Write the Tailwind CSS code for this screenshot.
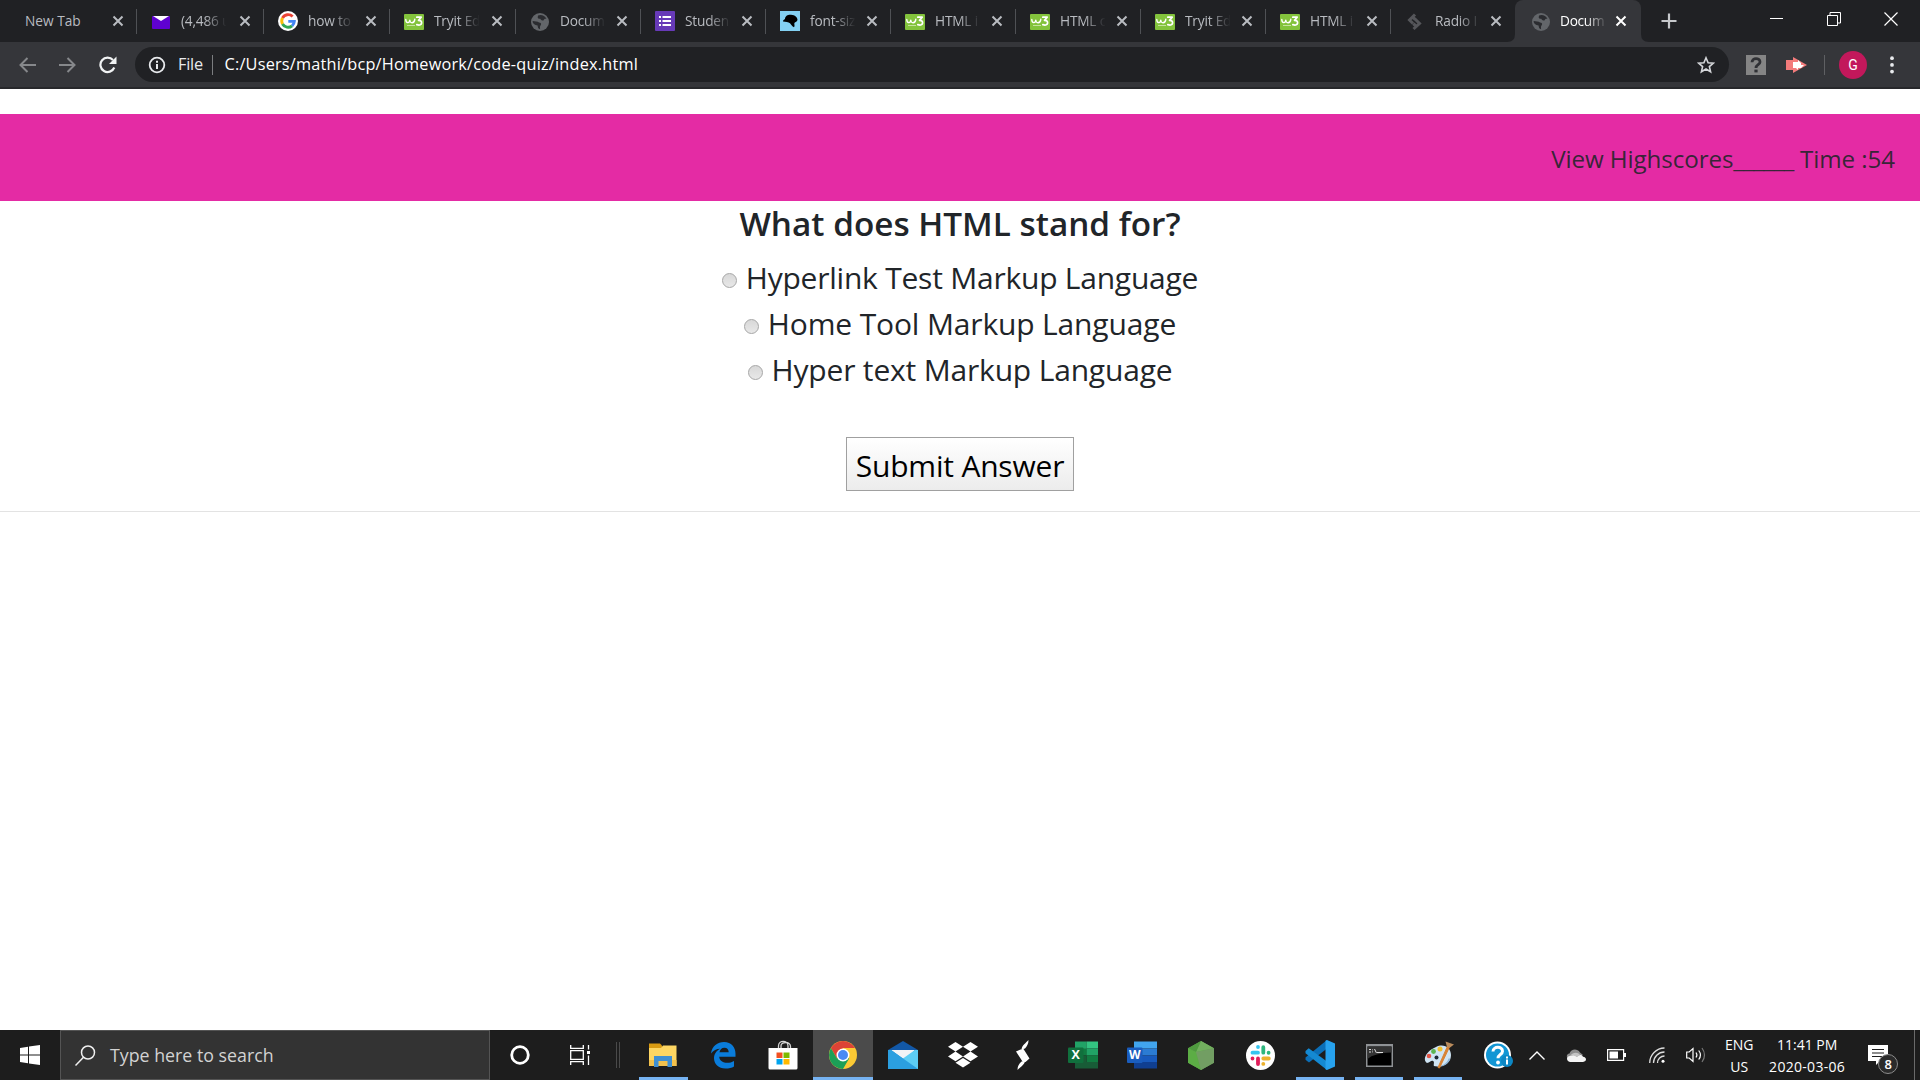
<!DOCTYPE html>
<html lang="en">
<head>
<meta charset="utf-8">
<title>Document</title>
<script src="https://cdn.jsdelivr.net/npm/@tailwindcss/browser@4"></script>
</head>
<body class="w-[1920px] h-[1080px] overflow-hidden bg-white flex flex-col font-['Open_Sans','Noto_Sans',sans-serif]">

<svg class="hidden">
  <symbol id="yahoo" viewBox="0 0 20 20"><rect x="1" y="5" width="18" height="13" rx="1" fill="#5f01d1"/><path d="M2 5h16l-8 5z" fill="#fff"/></symbol>
  <symbol id="google" viewBox="0 0 20 20"><circle cx="10" cy="10" r="10" fill="#fff"/><g fill="none" stroke-width="2.9"><path d="M14.6 5.6A6.3 6.3 0 0 0 4.5 7" stroke="#ea4335"/><path d="M4.5 7a6.3 6.3 0 0 0 0 6" stroke="#fbbc05"/><path d="M4.5 13a6.3 6.3 0 0 0 9.6 1.8" stroke="#34a853"/><path d="M14.1 14.8a6.3 6.3 0 0 0 2.2-4.4H10.3" stroke="#4285f4"/></g></symbol>
  <symbol id="w3" viewBox="0 0 20 20"><rect y="3" width="20" height="16" rx="1" fill="#83c33c"/><g fill="none" stroke="#fff" stroke-width="1.4" stroke-linecap="round" stroke-linejoin="round"><path d="M1.800 8.500c0 4 4 4 4 .6c0 3.600 4.400 3.600 5-.8"/><path d="M12.800 6.200h4.400l-2.700 3.200c4.500-.4 4.300 6.400-1.700 4.200" stroke-width="1.700"/></g><path d="M3 14.500h8" stroke="#c5e39c" stroke-width="1"/></symbol>
  <symbol id="globe" viewBox="0 0 20 20"><circle cx="10" cy="11" r="9" fill="#63666a"/><path d="M8 4.500c3-1.500 7 0 8.500 3.500c-1.500-.5-2.500 0-3 1.500c-1.500.3-2.700-.5-3.200-1.800c-1.300.3-2.300-.2-2.600-1.200zM2.600 10c2.500.2 5 .4 6.400 1.500c1.800.2 2.600 1.200 1.900 2.500c-1 .7-1 2-.8 4.300c-2-.2-2.300-2.300-2.500-3.800C4.500 14 2.500 12.500 2.600 10z" fill="#2b2c30"/></symbol>
  <symbol id="forms" viewBox="0 0 20 20"><rect width="20" height="20" rx="1" fill="#673ab7"/><path d="M4 5h2v2H4zm3.500 0H16v2H7.500zM4 9h2v2H4zm3.500 0H16v2H7.500zM4 13h2v2H4zm3.500 0H16v2H7.500z" fill="#fff"/></symbol>
  <symbol id="mdn" viewBox="0 0 20 20"><rect width="20" height="20" fill="#83d0f2"/><path d="M3 10.500c0-1.500 1-2 2-2.500c0-3 3-4.500 6-4.200c4 .2 6.500 2.500 6.500 5.200c-.5 2-3 2-3.200 3.500c0 1.500.7 2.500-.3 3.700c-2-.7-2.500-2.500-4-4c-1.500-1.500-4.500-1-7-1.700z" fill="#000"/></symbol>
  <symbol id="bracket" viewBox="0 0 20 20"><path d="M10 3.500L4.500 9l3.500 3.500M8 8.500l2.200-2.200M10 8l4.500 4.500L8.500 18M10.500 12.500l-2.200 2.200" fill="none" stroke="#55565a" stroke-width="3"/></symbol>
  <symbol id="x" viewBox="0 0 12 12"><path d="M1.500 1.500l9 9m0-9l-9 9" fill="none" stroke="currentColor" stroke-width="2"/></symbol>
</svg>

<!-- Tab strip -->
<header class="h-[42px] shrink-0 bg-[#202124] flex items-start text-[13.700px] text-[#b9bcc1]">
  <div id="tabs" class="flex"></div>
  <div class="w-[126px] h-[42px] rounded-t-lg bg-[#35363a] flex items-center pl-4 text-white relative">
    <svg class="absolute -left-2 bottom-0 size-2" viewBox="0 0 8 8"><path d="M8 0v8H0q8 0 8-8" fill="#35363a"/></svg>
    <svg class="absolute -right-2 bottom-0 size-2" viewBox="0 0 8 8"><path d="M0 0v8h8q-8 0-8-8" fill="#35363a"/></svg>
    <svg class="size-5 shrink-0"><use href="#globe"/></svg>
    <span class="ml-[9px] w-[47px] whitespace-nowrap tracking-[-0.3px] [mask-image:linear-gradient(to_right,black_55%,transparent)]">Docum</span>
    <svg class="size-3 ml-[8px] shrink-0"><use href="#x"/></svg>
  </div>
  <svg class="size-4 mt-[13px] ml-5" viewBox="0 0 16 16"><path d="M8 .5v15M.5 8h15" stroke="#c6c8cb" stroke-width="2.200"/></svg>
  <div class="ml-auto flex items-center h-[37px] pr-[22px] gap-[43px] text-white">
    <svg class="size-[14px]" viewBox="0 0 14 14"><path d="M0 6.500h13" stroke="currentColor"/></svg>
    <svg class="size-[14px]" viewBox="0 0 14 14"><path d="M.5 3.500h10v10h-10zM3 3.500V.5h10.500v10.500h-3" fill="none" stroke="currentColor"/></svg>
    <svg class="size-[14px]" viewBox="0 0 14 14"><path d="M.5 .5l13 13m0-13l-13 13" stroke="currentColor" stroke-width="1.200"/></svg>
  </div>
</header>

<!-- Toolbar -->
<nav class="h-[47px] shrink-0 bg-[#35363a] border-b-2 border-[#27282b] flex items-center">
  <svg class="w-[17px] h-[16px] ml-[19px]" viewBox="0 0 17 16" fill="none" stroke="#86888b" stroke-width="2"><path d="M17 8H2M8.500 1L1.500 8l7 7"/></svg>
  <svg class="w-[17px] h-[16px] ml-[23px]" viewBox="0 0 17 16" fill="none" stroke="#86888b" stroke-width="2"><path d="M0 8h15M8.500 1l7 7-7 7"/></svg>
  <svg class="size-[18px] ml-[23px]" viewBox="0 0 18 18"><path d="M15.300 11.500A7.200 7.200 0 1 1 14 4" fill="none" stroke="#f1f3f4" stroke-width="2.200"/><path d="M17.500 .500v7.500H10z" fill="#f1f3f4"/></svg>
  <div class="ml-[18px] w-[1594px] h-[35px] rounded-full bg-[#202124] flex items-center text-white text-[16.300px]">
    <svg class="size-[18px] ml-[13px]" viewBox="0 0 18 18"><circle cx="9" cy="9" r="7.300" fill="none" stroke="#e8eaed" stroke-width="1.800"/><path d="M8 8h2v5H8zM8 4.800h2v2H8z" fill="#e8eaed"/></svg>
    <span class="ml-3 tracking-[-0.2px] text-[#e8eaed]">File</span>
    <i class="w-[1.500px] h-5 bg-[#7b7d80] ml-[9px]"></i>
    <span class="ml-[11px] tracking-[0.210px]">C:/Users/mathi/bcp/Homework/code-quiz/index.html</span>
    <svg class="size-[18px] ml-auto mr-[14px]" viewBox="0 0 18 18"><path d="M9 1.800l2.100 4.900 5.300.4-4 3.500 1.200 5.200L9 13l-4.600 2.800 1.200-5.200-4-3.500 5.300-.4z" fill="none" stroke="#d4d6d9" stroke-width="1.600"/></svg>
  </div>
  <svg class="size-5 ml-[17px]" viewBox="0 0 20 20"><rect width="20" height="20" fill="#858585"/><path d="M6 7.200C6 2.500 14 2.500 14 7c0 2.800-4 2.700-4 6" fill="none" stroke="#303135" stroke-width="2.800"/><rect x="8.400" y="14.600" width="3.200" height="2.800" fill="#303135"/></svg>
  <svg class="w-[21px] h-[18px] ml-5" viewBox="0 0 21 18"><path d="M0 4h7V1l14 8-14 8v-3H0z" fill="#f37b7b"/><path d="M7 6h5V4l3 3v2h3l-3 3h-3v2l-2-2H7z" fill="#fff"/></svg>
  <i class="w-px h-5 bg-[#5f6063] ml-[17px]"></i>
  <span class="ml-[14px] size-7 rounded-full bg-[#c2185b] text-white text-[14px] leading-7 text-center font-[Roboto]">G</span>
  <svg class="w-1 h-[18px] ml-[23px]" viewBox="0 0 4 18" fill="#e8eaed"><circle cx="2" cy="2.200" r="1.900"/><circle cx="2" cy="8.900" r="1.900"/><circle cx="2" cy="15.600" r="1.900"/></svg>
</nav>

<!-- Quiz page -->
<main class="grow text-[#212529] pt-[25px] text-center">
  <div class="h-[87px] bg-[#e42ba4] pr-[25px] text-right text-[24.200px] leading-[89px] text-[#212529]/90 whitespace-pre tracking-[-0.100px] font-[370]">View Highscores<span class="tracking-[-0.500px]">______</span> Time :54</div>
  <h1 class="h-[53px] leading-[44px] text-[33.300px] font-semibold">What does HTML stand for?</h1>
  <form class="text-[30px] leading-[46px] flex flex-col items-center font-[370]">
    <label class="h-[46px] pt-0.5 flex items-center gap-[9px] tracking-[-0.230px]"><i class="mt-[5px] size-[15px] rounded-full border border-[#a6a6a6] bg-linear-to-b from-[#d8d8d8] to-[#e8e8e8]"></i>Hyperlink Test Markup Language</label>
    <label class="h-[46px] pt-0.5 flex items-center gap-[9px] tracking-[-0.150px]"><i class="mt-[5px] size-[15px] rounded-full border border-[#a6a6a6] bg-linear-to-b from-[#d8d8d8] to-[#e8e8e8]"></i>Home Tool Markup Language</label>
    <label class="h-[46px] pt-0.5 flex items-center gap-[9px] tracking-[-0.180px]"><i class="mt-[5px] size-[15px] rounded-full border border-[#a6a6a6] bg-linear-to-b from-[#d8d8d8] to-[#e8e8e8]"></i>Hyper text Markup Language</label>
    <button type="button" class="mt-[45px] w-[228px] h-[54px] pt-[3px] border border-[#a0a0a0] bg-linear-to-b from-white to-[#ececec] text-black whitespace-nowrap tracking-[-0.200px]">Submit Answer</button>
  </form>
  <hr class="mt-5 border-[#e3e3e3]">
</main>

<!-- Taskbar -->
<footer class="h-[50px] shrink-0 bg-[#1d1d1d] flex items-center text-white">
  <svg class="w-5 h-5 ml-5" viewBox="0 0 20 20" fill="#fff"><path d="M0 3l8-1.200v7.700H0zM9 1.600L20 0v9.500H9zM0 10.500h8v7.700L0 17zM9 10.500h11V20L9 18.400z"/></svg>
  <div class="ml-5 w-[430px] h-[50px] bg-[#333] border border-[#545454] flex items-center">
    <svg class="size-[21px] ml-[14px]" viewBox="0 0 21 21" fill="none" stroke="#f0f0f0" stroke-width="1.500"><circle cx="13" cy="7.500" r="6.500"/><path d="M8.500 12.300L.5 20.500"/></svg>
    <span class="ml-[14px] text-[17.800px] text-[#d2d2d2]">Type here to search</span>
  </div>
  <svg class="size-5 ml-5" viewBox="0 0 20 20"><circle cx="10" cy="10" r="8.300" fill="none" stroke="#fff" stroke-width="2.800"/></svg>
  <svg class="w-5 h-5 ml-10" viewBox="0 0 20 20" fill="none" stroke="#fff" stroke-width="1.300"><path d="M.7 0v3.300h12.600V0M.7 5.700h12.600v8.600H.7zM.7 20v-3.300h12.600V20M18.500 0v4.500M18.500 10.500V20"/><path d="M17 6h3v3h-3z" fill="#fff" stroke="none"/></svg>
  <i class="w-[4px] h-[26px] border-x border-[#4a4a4a] ml-[26px]"></i>

  <div class="ml-[13px] flex h-[50px]">
    <span class="w-[60px] flex justify-center items-center relative"><i class="absolute bottom-0 left-[6px] w-[49px] h-[3px] bg-[#76b3f2]"></i>
      <svg class="size-[30px]" viewBox="0 0 30 30"><path d="M1 3.500h11l2 2V8H1z" fill="#d99b12"/><path d="M1 8h12l2-2.500h13.500V26H1z" fill="#fdd663"/><path d="M1 20h27.500v6H1z" fill="#f2c14c"/><path d="M6 27V16h18v11h-4.500v-6h-9v6z" fill="#3f8fd2"/></svg></span>
    <span class="w-[60px] flex justify-center items-center"><svg class="size-[28px]" viewBox="0 0 28 28"><path d="M2 12.500C3 5 8.500 1 15 1c7.500 0 11.500 5.500 11.500 11.500v3.300H10.200c.3 4.300 4 6 8 6 2.500 0 4.700-.7 6.800-1.900v5.500C22.700 26.700 20 27.500 16.500 27.500 9.500 27.500 5 23 5 17.300c0-4.200 2.300-7.500 6.200-9.500C7.500 8 4.300 9.300 2 12.500zM10.500 11.200h9.200c0-2.700-1.500-4.500-4.300-4.500-2.700 0-4.500 1.800-4.900 4.500z" fill="#0a7cda"/></svg></span>
    <span class="w-[60px] flex justify-center items-center"><svg class="w-[30px] h-[30px]" viewBox="0 0 30 30"><path d="M10.500 9V6c0-6.300 9.500-6.300 9.500 0v3M13 9V5.800c0-4 9.500-5 9.500 .7V9" fill="none" stroke="#d5d5d5" stroke-width="1.300"/><path d="M.5 8h29v20a1.500 1.500 0 0 1-1.500 1.500H2A1.500 1.500 0 0 1 .5 28z" fill="#fff"/><path d="M8.500 12.500h6v5.500h-6z" fill="#f25022"/><path d="M15.500 12.500h6v5.500h-6z" fill="#7fba00"/><path d="M8.500 19h6v5.500h-6z" fill="#00a4ef"/><path d="M15.500 19h6v5.500h-6z" fill="#ffb900"/></svg></span>
    <span class="w-[60px] flex justify-center items-center relative bg-[#4b4b4b] border-b-[3px] border-[#76b3f2] pt-[3px]">
      <svg class="size-[28px]" viewBox="0 0 28 28"><circle cx="14" cy="14" r="14" fill="#fbc934"/><path d="M14 7h12.100A14 14 0 0 0 1.900 7L8 17.500z" fill="#dc4336"/><path d="M1.900 7A14 14 0 0 0 14 28l6.100-10.500L14 14 8 17.500z" fill="#1c9f57"/><circle cx="14" cy="14" r="6.500" fill="#fff"/><circle cx="14" cy="14" r="5" fill="#4a8af4"/></svg></span>
    <span class="w-[60px] flex justify-center items-center"><svg class="size-[30px]" viewBox="0 0 30 30"><path d="M0 10L15 1l15 9v6H0z" fill="#1258a7"/><path d="M3 10h24l-11 10z" fill="#f1f3f6"/><path d="M0 10l3 0 14 10L0 29z" fill="#35b2ec"/><path d="M30 10v19H0L27 10z" fill="#5ccdf5"/><path d="M0 10v19h30L3 10z" fill="#2b9fe0"/></svg></span>
    <span class="w-[60px] flex justify-center items-center"><svg class="w-[30px] h-[26px]" viewBox="0 0 30 26" fill="#fff"><path d="M7.500 0L15 4.800 7.500 9.600 0 4.800zM22.500 0L30 4.800l-7.500 4.800L15 4.800zM7.500 9.600L15 14.400l-7.500 4.800L0 14.400zM22.500 9.600l7.500 4.800-7.500 4.800-7.500-4.800zM15 16l7.500 4.800L15 25.600l-7.500-4.800z"/></svg></span>
    <span class="w-[60px] flex justify-center items-center"><svg class="w-[14px] h-[30px]" viewBox="0 0 14 30" fill="#fff"><path d="M12.500 0C10 3 6 5 5.500 9.500L9 8.500C11 6 12.500 4 12.500 0zM4.500 9.500L0 11.500 6.500 21.500 9.500 22 13.500 18.500 7.500 9zM1.500 30C4 27 8.500 25 9 21L5.500 21.500C3 24 1.500 26 1.500 30z"/></svg></span>
    <span class="w-[59.400px] flex justify-center items-center"><svg class="size-[30px]" viewBox="0 0 30 30"><path d="M7 1.500h11.500v13.500H7z" fill="#21a366"/><path d="M18.500 1.500H30v7H18.500z" fill="#33c481"/><path d="M18.500 8.500H30v7H18.500z" fill="#21a366"/><path d="M7 8.500h11.500v7H7zM18.500 15.500H30v6.500H18.500z" fill="#107c41"/><path d="M7 15.500h11.500V22H30v6.500H7z" fill="#185c37"/><rect y="7.500" width="15.500" height="15.500" rx="1" fill="#10703d"/><text x="7.700" y="19.300" text-anchor="middle" font-size="12.500" font-weight="700" fill="#fff">X</text></svg></span>
    <span class="w-[59.400px] flex justify-center items-center"><svg class="size-[30px]" viewBox="0 0 30 30"><path d="M7 1.500h23v7H7z" fill="#41a5ee"/><path d="M7 8.500h23v7H7z" fill="#2b7cd3"/><path d="M7 15.500h23V22H7z" fill="#185abd"/><path d="M7 22h23v6.500H7z" fill="#103f91"/><rect y="7.500" width="15.500" height="15.500" rx="1" fill="#1a5dbe"/><text x="7.700" y="19.300" text-anchor="middle" font-size="12" font-weight="700" fill="#fff">W</text></svg></span>
    <span class="w-[59.400px] flex justify-center items-center"><svg class="w-[26px] h-[29px]" viewBox="0 0 26 29"><path d="M13 0l13 7.200v14.600L13 29 0 21.800V7.200z" fill="#5fa04e"/><path d="M13 0l13 7.200L8 11z" fill="#72b05e"/><path d="M0 7.200L13 0 8 11z" fill="#4f9a3f"/><path d="M0 7.200L8 11l5 18L0 21.800z" fill="#5cad45"/><path d="M8 11l18-3.800v14.600L13 29z" fill="#729e63"/></svg></span>
    <span class="w-[59.400px] flex justify-center items-center"><svg class="size-[29px]" viewBox="0 0 29 29"><circle cx="14.500" cy="14.500" r="14.500" fill="#fff"/><g stroke-width="3.800" stroke-linecap="round"><path d="M12 6v.1M6.500 11.700H12" stroke="#36c5f0"/><path d="M17.300 6.200v5.500M22.600 11.700v.1" stroke="#2eb67d"/><path d="M17.300 17.500h5.500M17.300 22.800v.1" stroke="#ecb22e"/><path d="M12 17.500V23M6.500 17.500v.1" stroke="#e01e5a"/></g></svg></span>
    <span class="w-[59.400px] flex justify-center items-center relative"><i class="absolute bottom-0 left-[5px] w-[48px] h-[3px] bg-[#76b3f2]"></i>
      <svg class="size-[30px]" viewBox="0 0 30 30"><path d="M22 0v8.500L4 22.500l-3.500-2.700v-2.300z" fill="#0b6fb8"/><path d="M.5 11l3.200-2.700L22 21.500V30L.5 13.200z" fill="#1489d2"/><path d="M22 0l8 3.500v23L22 30l-1.500-.8V.8z" fill="#27a2ee"/></svg></span>
    <span class="w-[59.400px] flex justify-center items-center relative"><i class="absolute bottom-0 left-[5px] w-[48px] h-[3px] bg-[#76b3f2]"></i>
      <svg class="w-[27px] h-[23px]" viewBox="0 0 27 23"><rect width="27" height="23" fill="#8f9295"/><rect x="1.500" y="2.500" width="24" height="19" fill="#000"/><path d="M1.500 2.500h24v6Q8 9 1.500 15z" fill="#333"/><path d="M3 5.500h2M3 8h2M6.500 5.500v.8M6.500 7.500v.8M8.500 5l2 4M11 8.500h6" stroke="#ddd" stroke-width="1"/></svg></span>
    <span class="w-[59.400px] flex justify-center items-center relative"><i class="absolute bottom-0 left-[5px] w-[48px] h-[3px] bg-[#76b3f2]"></i>
      <svg class="size-[30px]" viewBox="0 0 30 30"><path d="M12 7c8-4 15 1 15 8 0 8-8 13-17 11-1-1 1-4-1-5s-3 2-6 2C-2 20 2 11 12 7z" fill="#cfe4f3"/><path d="M10 26.500c7 1 13-3 14.500-8l2 0C25 24 18 28.500 10 26.500z" fill="#8fb6d8"/><circle cx="5" cy="16" r="2.300" fill="#e25546"/><circle cx="9.500" cy="11.500" r="2.400" fill="#5bb450"/><circle cx="16" cy="9" r="2.500" fill="#f2c02e"/><circle cx="12.500" cy="17.500" r="2" fill="#1c2834"/><path d="M24 5l2 1-10.500 22-1.500-.5z" fill="#d98334" stroke="#d98334"/><path d="M21.500 1.500L30 4.500 26 7.500 23 7z" fill="#b98b5c"/></svg></span>
    <span class="w-[59.400px] flex justify-center items-center"><svg class="w-[29px] h-[29px]" viewBox="0 0 29 29"><circle cx="13.500" cy="14" r="13.500" fill="#fff"/><circle cx="13.500" cy="14" r="11.500" fill="#1296d4"/><path d="M9 10.500c.2-5.500 9.500-5.500 9.500-.3 0 3.300-4.500 3.300-4.500 7" fill="none" stroke="#fff" stroke-width="3"/><circle cx="14" cy="21.500" r="1.900" fill="#fff"/><circle cx="23" cy="20" r="6" fill="#0d87c4"/><path d="M22 18.500h2v5h-2zM22 15.500h2v2h-2z" fill="#fff"/></svg></span>
  </div>

  <div class="flex items-center">
    <svg class="w-4 h-[9px] ml-px" viewBox="0 0 16 9"><path d="M.5 8.500L8 1l7.500 7.500" fill="none" stroke="#fff" stroke-width="1.400"/></svg>
    <svg class="w-5 h-[13px] ml-[21px]" viewBox="0 0 20 13"><path d="M3 10C0 9 0 5 3.500 4.500 5 0 11-1 14 3.500L17 6l-7 4z" fill="#8f8f8f"/><path d="M4 13C0 12 0 7.500 4 7c3-1.500 5-1 7 1 1-2.500 5-3 6-.3 4 .3 4 5 0 5.300z" fill="#f4f4f4"/><path d="M4 7c3-4 8-4 10-1l-3.500 2C8.500 6 6.500 5.800 4 7z" fill="#c4c4c4"/></svg>
    <svg class="w-[19px] h-[12px] ml-[21px]" viewBox="0 0 19 12"><path d="M.6 .6h16v10.800H.6z" fill="none" stroke="#fff" stroke-width="1.200"/><path d="M2.500 2.500H11v7H2.500zM17 4h2v4h-2z" fill="#fff"/></svg>
    <svg class="w-4 h-4 ml-[23px]" viewBox="0 0 16 16" fill="none" stroke="#ddd" stroke-width="1.300"><path d="M.7 16A15 15 0 0 1 15.500 1M4.500 16A11 11 0 0 1 15.500 5M8.500 16a7 7 0 0 1 7-7"/><circle cx="14" cy="14.300" r="1.500" fill="#fff" stroke="none"/></svg>
    <svg class="w-5 h-[18px] ml-[21px]" viewBox="0 0 20 18" fill="none" stroke="#fff" stroke-width="1.200"><path d="M.7 6h2.500L7 2.500v13L3.200 12H.7z"/><path d="M10 6.500q1.800 2.500 0 5M12.700 4.500q3.500 4.500 0 9"/><path d="M16 2q5 7 0 14" stroke="#777"/></svg>
  </div>
  <div class="ml-[17px] w-[32px] pt-px text-center text-[14px] leading-[22px]"><div>ENG</div><div>US</div></div>
  <div class="ml-[12px] w-[80px] pt-px text-center text-[14px] leading-[22px] whitespace-nowrap"><div>11:41 PM</div><div class="tracking-[0.300px]">2020-03-06</div></div>
  <div class="relative ml-[21px] mt-[11px] w-[31px] h-[31px]">
    <svg class="w-[21px] h-[20px]" viewBox="0 0 21 20"><path d="M0 0h20v16h-8l-4 4v-4H0z" fill="#fff"/><path d="M4 4.500h12M4 8h12M4 11.500h12" stroke="#1d1d1d" stroke-width="1.200"/></svg>
    <span class="absolute left-[10px] top-[9px] size-5 rounded-full border border-[#8c8c8c] bg-[#2b2b2b] text-[13px] leading-[18px] text-center font-semibold">8</span>
  </div>
  <i class="ml-auto mr-[5px] w-px h-[50px] bg-[#6a6a6a]"></i>
</footer>

<script>
  // [icon, title, tab width]
  const tabs = [
    ['', 'New Tab', 137], ['yahoo', '(4,486 u', 127], ['google', 'how to', 126], ['w3', 'Tryit Ed', 126],
    ['globe', 'Docum', 125], ['forms', 'Studen', 125], ['mdn', 'font-siz', 125], ['w3', 'HTML i', 125],
    ['w3', 'HTML c', 125], ['w3', 'Tryit Ed', 125], ['w3', 'HTML i', 125], ['bracket', 'Radio I', 124]
  ];
  document.getElementById('tabs').innerHTML = tabs.map(([icon, title, w], i) => `
    <div class="h-[42px] flex items-center relative pr-[13px]" style="width:${w}px">
      ${icon ? `<svg class="size-5 ml-[14px] mr-[10px] shrink-0"><use href="#${icon}"/></svg>
      <span class="w-[47px] whitespace-nowrap tracking-[-0.200px] [mask-image:linear-gradient(to_right,black_50%,transparent_97%)]">${title}</span>`
      : `<span class="ml-[25px]">${title}</span>`}
      <svg class="size-3 ml-auto shrink-0"><use href="#x"/></svg>
      ${i < 11 ? '<i class="absolute right-0 top-[9px] w-px h-[25px] bg-[#4f5155]"></i>' : ''}
    </div>`).join('');
</script>
</body>
</html>
